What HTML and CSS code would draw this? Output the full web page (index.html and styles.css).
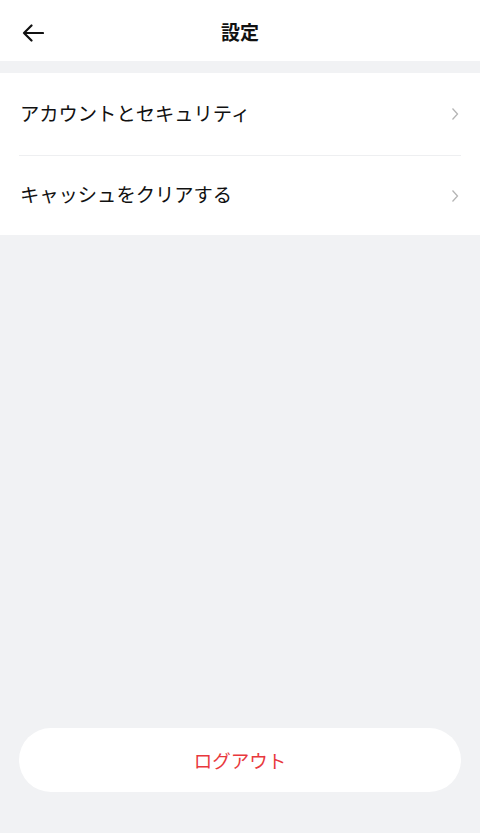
FILE: index.html
```html
<!DOCTYPE html>
<html lang="ja">
<head>
    <meta charset="UTF-8">
    <title>設定</title>
    <link rel="stylesheet" href="styles.css">
</head>
<body>

<div class="page">

    <header class="topbar">
        <button class="back" aria-label="戻る">
            <svg width="22" height="18" viewBox="0 0 22 18">
                <path d="M21 9H2M9.5 1.5L2 9l7.5 7.5" fill="none" stroke="#111" stroke-width="2.2" stroke-linecap="round" stroke-linejoin="round"/>
            </svg>
        </button>
        <h1>設定</h1>
    </header>

    <ul class="menu">
        <li class="menu-item">
            <span>アカウントとセキュリティ</span>
            <svg class="chev" width="8" height="14" viewBox="0 0 8 14"><path d="M1.5 1.5L6.5 7l-5 5.5" fill="none" stroke="#b5b5b5" stroke-width="1.3"/></svg>
        </li>
        <li class="menu-item">
            <span>キャッシュをクリアする</span>
            <svg class="chev" width="8" height="14" viewBox="0 0 8 14"><path d="M1.5 1.5L6.5 7l-5 5.5" fill="none" stroke="#b5b5b5" stroke-width="1.3"/></svg>
        </li>
    </ul>

    <div class="spacer"></div>

    <div class="footer">
        <button class="logout">ログアウト</button>
    </div>

</div>

</body>
</html>
```

FILE: styles.css
```css
* {
    box-sizing: border-box;
}

html, body {
    margin: 0;
    height: 100%;
}

body {
    background: #f1f2f4;
    font-family: "Noto Sans CJK JP", "Noto Sans", sans-serif;
    color: #111;
}

.page {
    display: flex;
    flex-direction: column;
    min-height: 100%;
}

.topbar {
    position: relative;
    height: 61px;
    padding-top: 2px;
    background: #fff;
    display: flex;
    align-items: center;
    justify-content: center;
}

.topbar h1 {
    margin: 0;
    font-size: 19px;
    font-weight: 700;
}

.back {
    position: absolute;
    left: 22px;
    top: 24px;
    padding: 0;
    border: 0;
    background: none;
    display: flex;
}

.menu {
    list-style: none;
    margin: 12px 0 0;
    padding: 0 19px;
    background: #fff;
}

.menu-item {
    height: 82px;
    display: flex;
    align-items: center;
    justify-content: space-between;
    font-size: 19.3px;
    padding: 0 2px 3px 1px;
}

.menu-item + .menu-item {
    border-top: 1px solid #eeeff1;
    height: 80px;
}

.chev {
    margin-top: 3px;
}

.spacer {
    flex: 1;
}

.footer {
    padding: 0 19px 41px;
}

.logout {
    width: 100%;
    height: 64px;
    border: 0;
    border-radius: 32px;
    background: #fff;
    color: #e8383d;
    font-family: inherit;
    font-size: 18.5px;
}
```
